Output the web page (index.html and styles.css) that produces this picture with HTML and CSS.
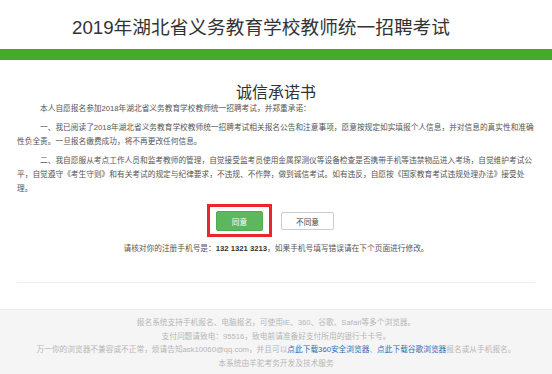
FILE: index.html
```html
<!DOCTYPE html>
<html lang="zh-CN">
<head>
<meta charset="utf-8">
<title>诚信承诺书</title>
<link rel="stylesheet" href="styles.css">
</head>
<body>
<div class="page">
  <header class="top">
    <h1 class="title">2019年湖北省义务教育学校教师统一招聘考试</h1>
  </header>
  <div class="bar"></div>
  <main class="content">
    <h2 class="heading">诚信承诺书</h2>
    <p class="para">本人自愿报名参加2018年湖北省义务教育学校教师统一招聘考试，并郑重承诺：</p>
    <p class="para">一、我已阅读了2018年湖北省义务教育学校教师统一招聘考试相关报名公告和注意事项，愿意按规定如实填报个人信息，并对信息的真实性和准确性负全责。一旦报名缴费成功，将不再更改任何信息。</p>
    <p class="para">二、我自愿服从考点工作人员和监考教师的管理，自觉接受监考员使用金属探测仪等设备检查是否携带手机等违禁物品进入考场，自觉维护考试公平，自觉遵守《考生守则》和有关考试的规定与纪律要求，不违规、不作弊，做到诚信考试。如有违反，自愿按《国家教育考试违规处理办法》接受处理。</p>
    <div class="actions">
      <span class="mark"><button class="btn agree" type="button">同意</button></span>
      <button class="btn disagree" type="button">不同意</button>
    </div>
    <p class="phone">请核对你的注册手机号是：<b class="num">132 1321 3213</b>，如果手机号填写错误请在下个页面进行修改。</p>
    <div class="rule"></div>
  </main>
  <footer class="foot">
    <p>报名系统支持手机报名、电脑报名，可使用IE、360、谷歌、Safari等多个浏览器。</p>
    <p>支付问题请致电：95516，致电前请准备好支付所用的银行卡卡号。</p>
    <p>万一你的浏览器不兼容或不正常，烦请告知ask10060@qq.com，并且可以<a class="link" href="#">点此下载360安全浏览器</a>、<a class="link" href="#">点此下载谷歌浏览器</a>报名或从手机报名。</p>
    <p>本系统由羊驼考务开发及技术服务</p>
  </footer>
</div>
</body>
</html>
```

FILE: styles.css
```css
* { box-sizing: border-box; }
html, body { margin: 0; padding: 0; background: #fff; }
body {
  font-family: "Liberation Sans", "Noto Sans CJK SC", sans-serif;
  color: #555;
  width: 552px;
  height: 374px;
  overflow: hidden;
}
.page { display: flex; flex-direction: column; }
.top { height: 49px; padding: 6px 30px 0 0; }
.title {
  margin: 0;
  font-size: 18.7px;
  font-weight: normal;
  line-height: 43px;
  text-align: center;
  color: #333;
}
.bar { height: 11px; background: #47a92a; }
.content { padding: 0 17px; }
.heading {
  margin: 24px 0 0;
  font-size: 16px;
  font-weight: normal;
  line-height: 18px;
  text-align: center;
  color: #333;
}
.para {
  margin: 5px 0 0;
  font-size: 7.7px;
  line-height: 14px;
  text-indent: 23px;
  color: #555;
}
.heading + .para { margin-top: 0; }
.actions {
  display: flex;
  justify-content: center;
  align-items: center;
  gap: 18px;
  margin-top: 15px;
  padding-right: 2px;
}
.mark { position: relative; display: block; }
.mark::after {
  content: "";
  position: absolute;
  left: -9px; top: -7px; right: -9px; bottom: -6px;
  border: 3.5px solid #e8262b;
}
.btn {
  font-family: "Liberation Sans", "Noto Sans CJK SC", sans-serif;
  font-size: 7.7px;
  border-radius: 2px;
  padding: 0;
  display: block;
}
.agree {
  width: 47px; height: 20px;
  background: #5cb85c;
  border: 1px solid #4cae4c;
  color: #fff;
}
.disagree {
  width: 53px; height: 18px;
  background: #fff;
  border: 1px solid #ccc;
  color: #444;
}
.phone {
  margin: 11px 0 0;
  font-size: 7.7px;
  line-height: 14px;
  text-align: center;
  color: #555;
}
.num { color: #333; }
.rule { height: 1px; background: #eee; margin-top: 26px; }
.foot {
  margin-top: 26px;
  background: #f5f5f5;
  border-top: 1px solid #ebebeb;
  padding-top: 6px;
  height: 70px;
}
.foot p {
  margin: 0;
  font-size: 7.7px;
  line-height: 13.5px;
  text-align: center;
  color: #b5b5b5;
}
.link { color: #2e6db4; text-decoration: none; }
```
